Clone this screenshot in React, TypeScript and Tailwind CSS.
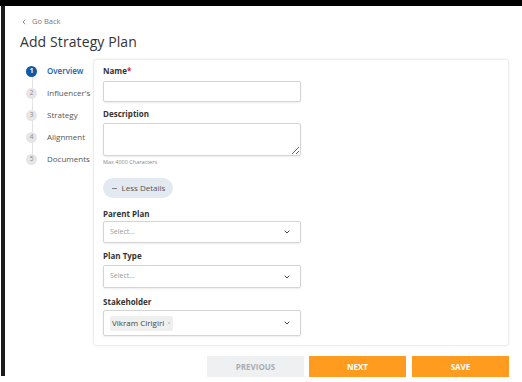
import { ChevronDown, ChevronLeft, Minus, X } from "lucide-react";

const steps = ["Overview", "Influencer's", "Strategy", "Alignment", "Documents"];

const Label = ({ text, required = false }: { text: string; required?: boolean }) => (
  <div className="h-[10px] text-[8px] leading-[10px] font-bold text-[#333]">
    {text}
    {required && <span className="text-[#d9262f]">*</span>}
  </div>
);

const Select = ({ className, children }: { className: string; children?: React.ReactNode }) => (
  <div
    className={`w-[198px] flex items-center justify-between rounded-[2px] border border-[#d4d4d4] shadow-[0_1px_2px_rgba(0,0,0,0.08)] pl-[6px] pr-[9px] ${className}`}
  >
    {children ?? <span className="text-[7px] text-[#9a9a9a]">Select...</span>}
    <ChevronDown size={8} strokeWidth={3} className="text-[#444]" />
  </div>
);

export default function App() {
  return (
    <div className="w-[522px] h-[382px] bg-white overflow-hidden flex flex-col font-['Open_Sans',sans-serif]">
      <div className="h-[6px] bg-black shrink-0" />
      <div className="flex flex-1">
        <div className="ml-[1px] w-[4px] h-[370px] bg-[#1a1a1a] shrink-0" />
        <div className="pl-[15px] flex-1 flex flex-col">
          <div className="mt-[11px] h-[10px] flex items-center gap-[4px] text-[7.5px] text-[#777]">
            <ChevronLeft size={8} strokeWidth={2.5} />
            <span>Go Back</span>
          </div>
          <h1 className="mt-[5px] h-[20px] text-[14px] leading-[20px] text-[#333] tracking-[0.1px]">
            Add Strategy Plan
          </h1>
          <div className="mt-[7px] flex">
            <div className="w-[73px] pl-[6px] pt-[1px] relative">
              <div className="absolute left-[11.5px] top-[12px] h-[88px] w-px bg-[#e2e2e2]" />
              {steps.map((s, i) => (
                <div key={s} className="h-[22px] flex items-center gap-[10px] relative">
                  <div
                    className={`w-[11px] h-[11px] shrink-0 rounded-full flex items-center justify-center text-[6.5px] ${
                      i === 0 ? "bg-[#0f5aa8] text-white font-bold" : "bg-[#e6e6e6] text-[#8a8a8a]"
                    }`}
                  >
                    {i + 1}
                  </div>
                  <span
                    className={`text-[8px] ${i === 0 ? "text-[#1560b0] font-semibold" : "text-[#555]"}`}
                  >
                    {s}
                  </span>
                </div>
              ))}
            </div>
            <div className="flex flex-col">
              <div className="w-[416px] rounded-[3px] border border-[#ececec] shadow-[0_0_3px_rgba(0,0,0,0.06)] pl-[9px] pt-[6px] pb-[9px]">
                <Label text="Name" required />
                <div className="mt-[5px] w-[198px] h-[21px] rounded-[2px] border border-[#d4d4d4] shadow-[0_1px_2px_rgba(0,0,0,0.08)]" />
                <div className="mt-[7px]">
                  <Label text="Description" />
                </div>
                <textarea
                  readOnly
                  className="mt-[4px] block w-[198px] h-[33px] rounded-[2px] border border-[#d4d4d4] shadow-[0_1px_2px_rgba(0,0,0,0.08)] outline-none"
                />
                <div className="mt-[2px] h-[8px] text-[5.5px] leading-[8px] text-[#888]">Max 4000 Characters</div>
                <div className="mt-[12px] w-[70px] h-[20px] rounded-full bg-[#e3e9f1] flex items-center justify-center gap-[4px] text-[8px] text-[#555]">
                  <Minus size={7} strokeWidth={2.5} />
                  <span>Less Details</span>
                </div>
                <div className="mt-[11px]">
                  <Label text="Parent Plan" />
                </div>
                <Select className="mt-[2px] h-[22px]" />
                <div className="mt-[8px]">
                  <Label text="Plan Type" />
                </div>
                <Select className="mt-[4px] h-[23px]" />
                <div className="mt-[9px]">
                  <Label text="Stakeholder" />
                </div>
                <Select className="mt-[3px] h-[26px] pl-[3px]">
                  <div className="h-[15px] px-[2px] bg-[#efefef] rounded-[2px] flex items-center gap-[3px] text-[8px] text-[#444]">
                    <span>Vikram Cirigiri</span>
                    <X size={4} strokeWidth={2} className="text-[#999]" />
                  </div>
                </Select>
              </div>
              <div className="mt-[10px] flex justify-end gap-[5px] text-[8px] font-bold">
                <div className="w-[97px] h-[21px] bg-[#eff0f2] text-[#a9adb3] flex items-center justify-center">
                  PREVIOUS
                </div>
                <div className="w-[97px] h-[21px] bg-[#ff9b1f] text-white flex items-center justify-center">
                  NEXT
                </div>
                <div className="ml-[1px] w-[97px] h-[21px] bg-[#ff9b1f] text-white flex items-center justify-center">
                  SAVE
                </div>
              </div>
            </div>
          </div>
        </div>
      </div>
    </div>
  );
}
